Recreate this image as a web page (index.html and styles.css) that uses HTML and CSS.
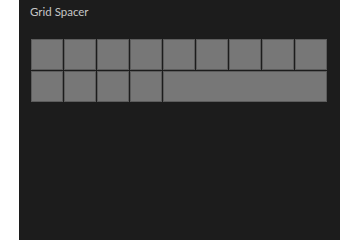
FILE: index.html
```html
<!DOCTYPE html>
<html>
<head>
    <title>Grid Spacer</title>
    <link rel="stylesheet" href="styles.css">
</head>
<body>
    <div class="panel">
        <div class="title">Grid Spacer</div>

        <!-- 9 column grid -->
        <div class="grid">
            <div class="cell"></div>
            <div class="cell"></div>
            <div class="cell"></div>
            <div class="cell"></div>
            <div class="cell"></div>
            <div class="cell"></div>
            <div class="cell"></div>
            <div class="cell"></div>
            <div class="cell"></div>
            <div class="cell"></div>
            <div class="cell"></div>
            <div class="cell"></div>
            <div class="cell"></div>
            <div class="cell spacer"></div>
        </div>
    </div>
</body>
</html>
```

FILE: styles.css
```css
html, body {
    margin: 0;
    padding: 0;
    background: #ffffff;
    height: 100%;
}
.panel {
    width: 321px;
    height: 240px;
    margin-left: 19px;
    box-sizing: border-box;
    padding: 4px 0 0 11px;
    background: #1c1c1c;
}
.title {
    font-family: Lato, "Open Sans", sans-serif;
    font-size: 11.5px;
    line-height: 16px;
    color: #c6c6c6;
    margin-bottom: 19px;
}
.grid {
    width: 296px;
    margin-left: 1px;
    display: grid;
    grid-template-columns: repeat(9, 1fr);
    grid-auto-rows: 31px;
    gap: 1px;
}
.cell {
    background: #777777;
    border: 1px solid #5c5c5c;
}
.spacer {
    grid-column: span 5;
}
```
